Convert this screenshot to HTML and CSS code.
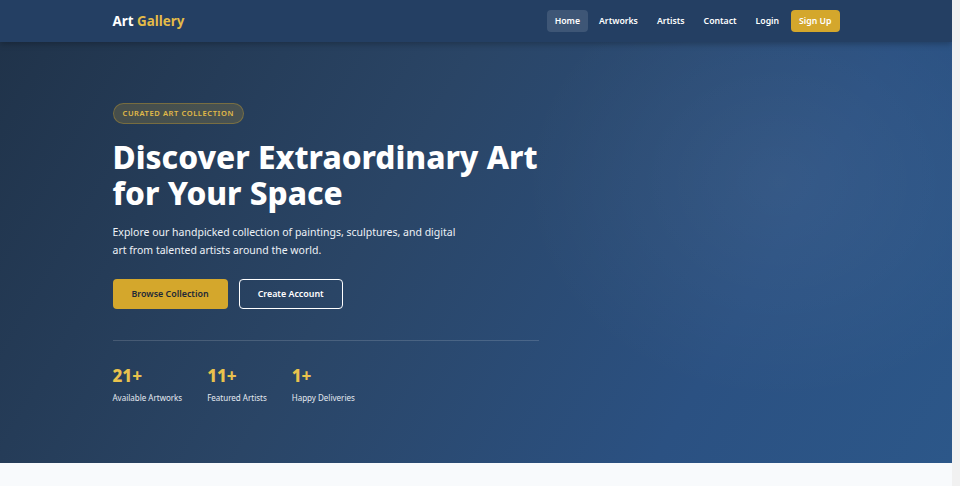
FILE: index.html
```html
<!DOCTYPE html>
<html lang="en">
<head>
<meta charset="utf-8">
<title>Art Gallery</title>
<link rel="stylesheet" href="styles.css">
</head>
<body>
<header class="nav">
  <div class="container nav-inner">
    <a class="logo" href="#">Art <span class="logo-accent">Gallery</span></a>
    <nav class="links">
      <a class="link active" href="#">Home</a>
      <a class="link" href="#">Artworks</a>
      <a class="link" href="#">Artists</a>
      <a class="link" href="#">Contact</a>
      <a class="link" href="#">Login</a>
      <a class="link signup" href="#">Sign Up</a>
    </nav>
  </div>
</header>
<section class="hero">
  <div class="container">
    <div class="hero-content">
      <span class="badge">Curated Art Collection</span>
      <h1 class="title">Discover Extraordinary Art for Your Space</h1>
      <p class="lead">Explore our handpicked collection of paintings, sculptures, and digital art from talented artists around the world.</p>
      <div class="actions">
        <a class="btn btn-gold" href="#">Browse Collection</a>
        <a class="btn btn-outline" href="#">Create Account</a>
      </div>
      <div class="stats">
        <div class="stat"><div class="stat-num">21+</div><div class="stat-label">Available Artworks</div></div>
        <div class="stat"><div class="stat-num">11+</div><div class="stat-label">Featured Artists</div></div>
        <div class="stat"><div class="stat-num">1+</div><div class="stat-label">Happy Deliveries</div></div>
      </div>
    </div>
  </div>
</section>
<section class="below">
  <div class="container"></div>
</section>
</body>
</html>
```
FILE: styles.css
```css
* { box-sizing: border-box; }
html {
  margin: 0;
  padding: 0;
  background: #f1f1f1;
}
body {
  margin: 0 8px 0 0;
  padding: 0;
  font-family: "Noto Sans", "Open Sans", sans-serif;
  background: #f8fafc;
  color: #fff;
}
a { text-decoration: none; color: inherit; }
.container {
  width: 727px;
  margin: 0 auto;
}
.nav {
  background: #243f63;
  height: 42px;
  box-shadow: 0 2px 6px rgba(0,0,0,0.25);
  position: relative;
  z-index: 2;
}
.nav-inner {
  height: 42px;
  display: flex;
  align-items: center;
  justify-content: space-between;
}
.logo {
  font-size: 13.4px;
  font-weight: 700;
  color: #fff;
}
.logo-accent { color: #e3bb48; }
.links {
  display: flex;
  align-items: center;
  gap: 3px;
}
.link {
  font-size: 8.7px;
  font-weight: 600;
  padding: 0 8px;
  height: 22px;
  line-height: 22px;
  border-radius: 4px;
  color: #fff;
}
.link.active { background: rgba(255,255,255,0.12); }
.link.signup {
  background: #d4a72c;
  color: #fff;
  margin-left: 1px;
}
.hero {
  height: 421px;
  background:
    radial-gradient(ellipse 260px 220px at 780px 140px, rgba(255,255,255,0.05), rgba(255,255,255,0)),
    linear-gradient(120deg, #20334a 0%, #2a4566 40%, #2b5182 75%, #2c5789 100%);
  padding-top: 57px;
}
.hero-content { width: 440px; }
.badge {
  display: inline-block;
  font-size: 7.5px;
  font-weight: 600;
  letter-spacing: 0.6px;
  text-transform: uppercase;
  color: #e3bb48;
  background: rgba(212,167,44,0.2);
  border: 1px solid rgba(212,167,44,0.35);
  border-radius: 999px;
  padding: 0 9px;
  height: 21px;
  line-height: 19px;
}
.title {
  font-size: 31.6px;
  font-weight: 800;
  line-height: 36px;
  margin: 15px 0 0;
}
.lead {
  font-size: 10.5px;
  line-height: 18px;
  margin: 12px 0 0;
  width: 350px;
  color: #eef2f7;
}
.actions {
  display: flex;
  gap: 11px;
  margin-top: 20px;
}
.btn {
  height: 30px;
  line-height: 28px;
  padding: 0 18px;
  font-size: 8.9px;
  font-weight: 600;
  border-radius: 4px;
  border: 1px solid transparent;
}
.btn-gold { background: #d4a72c; color: #1f2a37; }
.btn-outline { border-color: #fff; color: #fff; }
.stats {
  display: flex;
  gap: 25px;
  margin-top: 31px;
  padding-top: 24px;
  border-top: 1px solid rgba(255,255,255,0.15);
  width: 426px;
}
.stat-num {
  font-size: 17px;
  font-weight: 800;
  color: #e9c24d;
  line-height: 22px;
}
.stat-label {
  font-size: 8px;
  margin-top: 5px;
  color: #e5eaf1;
}
.below {
  height: 400px;
  background: #f8fafc;
}
```
